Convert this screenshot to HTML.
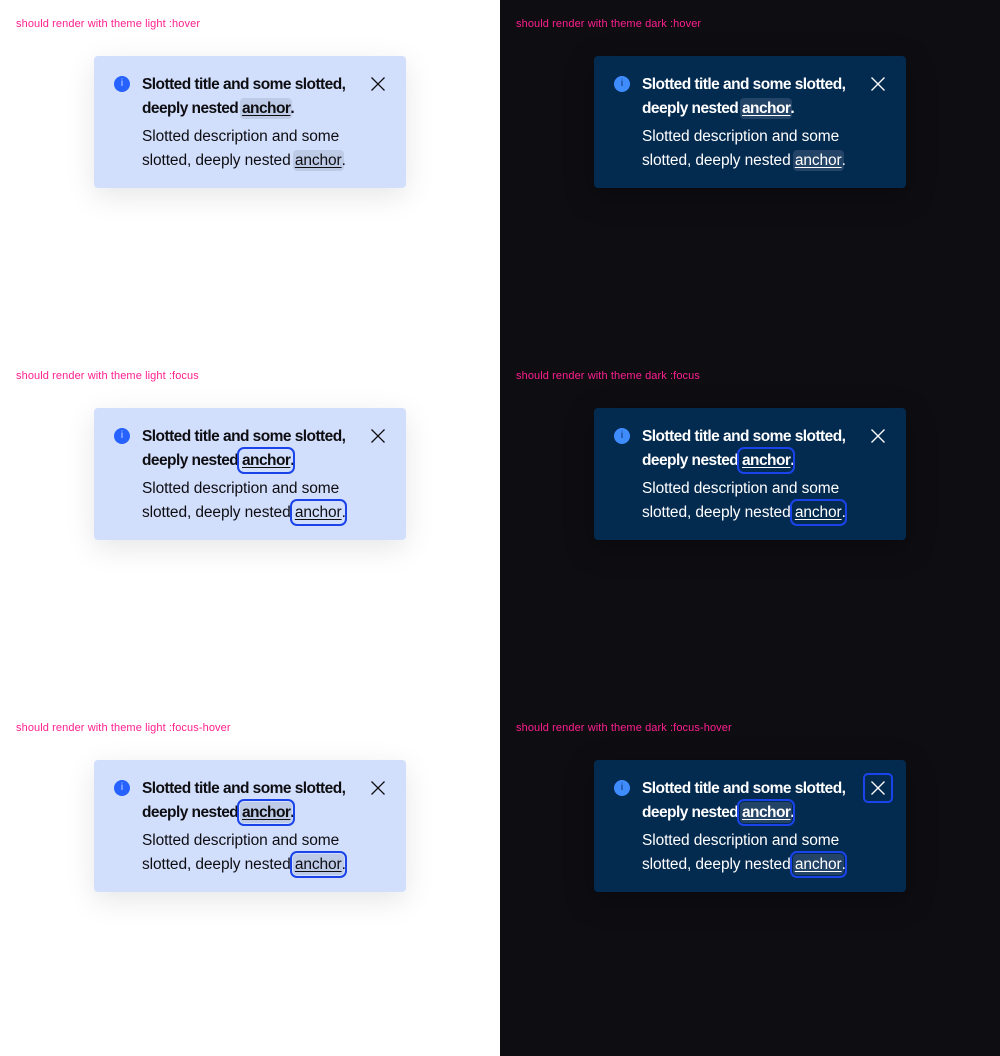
<!DOCTYPE html>
<html><head><meta charset="utf-8"><style>
*{margin:0;padding:0;box-sizing:border-box}
body{width:1000px;height:1056px;position:relative;overflow:hidden;background:#fff;font-family:"Liberation Sans",sans-serif}
.dark{position:absolute;left:500px;top:0;width:500px;height:1056px;background:#0e0d12}
.lbl{position:absolute;font-size:11px;color:#ff1f8f;letter-spacing:0.1px;line-height:14px}
.card{position:absolute;width:312px;height:132px;border-radius:4px;background:#d2dffc;color:#0e0d12;box-shadow:0 8px 30px rgba(0,0,0,0.10)}
.card.d{background:#032a4f;color:#fff;box-shadow:0 8px 30px rgba(0,0,0,0.3)}
.ic{position:absolute;left:20px;top:20px;width:16px;height:16px;border-radius:50%;background:#2762ff;color:#cfe0ff;font-size:10px;line-height:16px;text-align:center;font-family:"Liberation Sans",sans-serif}
.d .ic{background:#3f8cff;color:#0b2f60}
.tx{position:absolute;left:48px;top:17px;font-size:15.5px;line-height:24px;white-space:nowrap;letter-spacing:-0.1px}
.t{font-weight:bold;letter-spacing:-0.55px}
.desc{margin-top:4px}
.a{text-decoration:underline;text-underline-offset:2px;border-radius:4px;padding:2px 2px;margin:0 -2px}
.h{background:rgba(120,130,160,0.22)}
.d .h{background:rgba(150,160,190,0.22)}
.f{outline:2px solid #1a44ea;outline-offset:1px}
.x{position:absolute;left:272px;top:16px;width:24px;height:24px;border-radius:3px}
.x svg{position:absolute;left:5px;top:5px}
.xf{outline:2px solid #1a44ea;outline-offset:0}
</style></head><body>
<div class="dark"></div>

<div class="lbl" style="left:16px;top:17px">should render with theme light :hover</div>
<div class="lbl" style="left:516px;top:17px">should render with theme dark :hover</div>
<div class="lbl" style="left:16px;top:369px">should render with theme light :focus</div>
<div class="lbl" style="left:516px;top:369px">should render with theme dark :focus</div>
<div class="lbl" style="left:16px;top:721px">should render with theme light :focus-hover</div>
<div class="lbl" style="left:516px;top:721px">should render with theme dark :focus-hover</div>

<!-- row 1 -->
<div class="card" style="left:94px;top:56px"><div class="ic">i</div>
<div class="tx"><div class="t">Slotted title and some slotted,<br>deeply nested <span class="a h">anchor</span>.</div><div class="desc">Slotted description and some<br>slotted, deeply nested <span class="a h">anchor</span>.</div></div>
<div class="x"><svg width="14" height="14" viewBox="0 0 14 14"><path d="M0.5 0.5L13.5 13.5M13.5 0.5L0.5 13.5" stroke="#0e0d12" stroke-width="1.3"/></svg></div></div>
<div class="card d" style="left:594px;top:56px"><div class="ic">i</div>
<div class="tx"><div class="t">Slotted title and some slotted,<br>deeply nested <span class="a h">anchor</span>.</div><div class="desc">Slotted description and some<br>slotted, deeply nested <span class="a h">anchor</span>.</div></div>
<div class="x"><svg width="14" height="14" viewBox="0 0 14 14"><path d="M0.5 0.5L13.5 13.5M13.5 0.5L0.5 13.5" stroke="#fff" stroke-width="1.3"/></svg></div></div>

<!-- row 2 -->
<div class="card" style="left:94px;top:408px"><div class="ic">i</div>
<div class="tx"><div class="t">Slotted title and some slotted,<br>deeply nested <span class="a f">anchor</span>.</div><div class="desc">Slotted description and some<br>slotted, deeply nested <span class="a f">anchor</span>.</div></div>
<div class="x"><svg width="14" height="14" viewBox="0 0 14 14"><path d="M0.5 0.5L13.5 13.5M13.5 0.5L0.5 13.5" stroke="#0e0d12" stroke-width="1.3"/></svg></div></div>
<div class="card d" style="left:594px;top:408px"><div class="ic">i</div>
<div class="tx"><div class="t">Slotted title and some slotted,<br>deeply nested <span class="a f">anchor</span>.</div><div class="desc">Slotted description and some<br>slotted, deeply nested <span class="a f">anchor</span>.</div></div>
<div class="x"><svg width="14" height="14" viewBox="0 0 14 14"><path d="M0.5 0.5L13.5 13.5M13.5 0.5L0.5 13.5" stroke="#fff" stroke-width="1.3"/></svg></div></div>

<!-- row 3 -->
<div class="card" style="left:94px;top:760px"><div class="ic">i</div>
<div class="tx"><div class="t">Slotted title and some slotted,<br>deeply nested <span class="a f h">anchor</span>.</div><div class="desc">Slotted description and some<br>slotted, deeply nested <span class="a f h">anchor</span>.</div></div>
<div class="x"><svg width="14" height="14" viewBox="0 0 14 14"><path d="M0.5 0.5L13.5 13.5M13.5 0.5L0.5 13.5" stroke="#0e0d12" stroke-width="1.3"/></svg></div></div>
<div class="card d" style="left:594px;top:760px"><div class="ic">i</div>
<div class="tx"><div class="t">Slotted title and some slotted,<br>deeply nested <span class="a f h">anchor</span>.</div><div class="desc">Slotted description and some<br>slotted, deeply nested <span class="a f h">anchor</span>.</div></div>
<div class="x xf" style="left:271px;top:15px;width:26px;height:26px"><svg width="14" height="14" viewBox="0 0 14 14" style="left:6px;top:6px"><path d="M0.5 0.5L13.5 13.5M13.5 0.5L0.5 13.5" stroke="#fff" stroke-width="1.3"/></svg></div></div>
</body></html>
